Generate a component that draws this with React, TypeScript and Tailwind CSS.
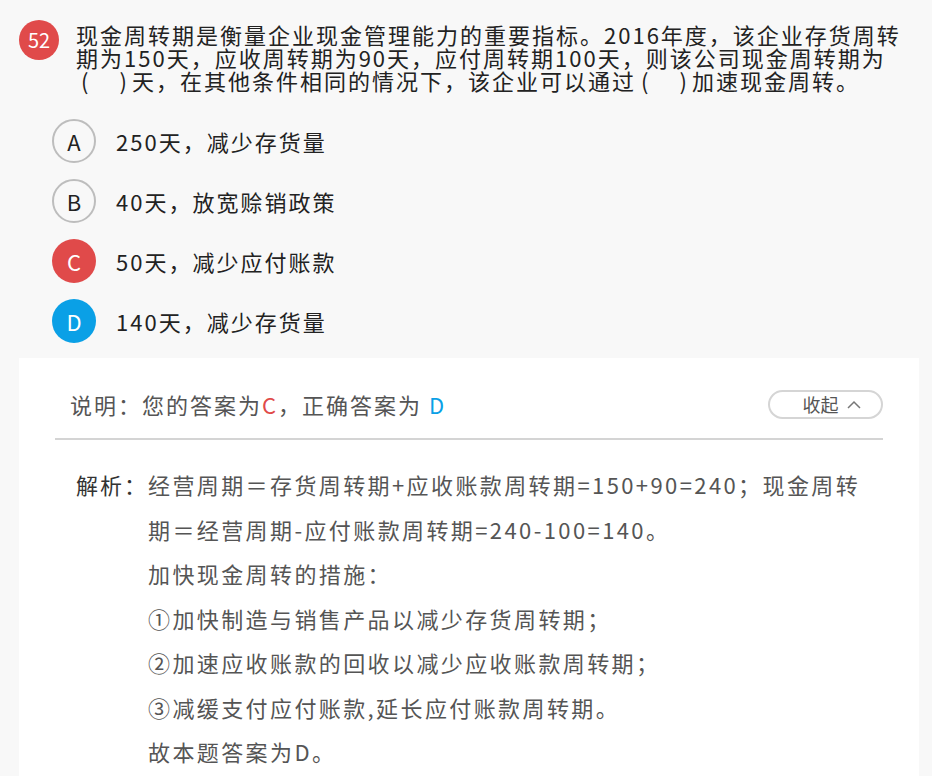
import React from 'react'

const options = [
  { key: 'A', text: '250天，减少存货量', state: 'none' },
  { key: 'B', text: '40天，放宽赊销政策', state: 'none' },
  { key: 'C', text: '50天，减少应付账款', state: 'wrong' },
  { key: 'D', text: '140天，减少存货量', state: 'right' },
]

const analysis = [
  '经营周期＝存货周转期+应收账款周转期=150+90=240；现金周转',
  '期＝经营周期-应付账款周转期=240-100=140。',
  '加快现金周转的措施：',
  '①加快制造与销售产品以减少存货周转期；',
  '②加速应收账款的回收以减少应收账款周转期；',
  '③减缓支付应付账款,延长应付账款周转期。',
  '故本题答案为D。',
]

function Blank() {
  return (
    <span className="inline-flex w-[56px] justify-between px-[5px] tracking-normal">
      <span>(</span>
      <span>)</span>
    </span>
  )
}

export default function App() {
  return (
    <div className="min-h-[776px] bg-[#f8f8f8] font-['Noto_Sans_CJK_SC',sans-serif] overflow-hidden">
      {/* Question */}
      <div className="flex items-start pt-[20px] pl-[19px]">
        <div className="w-10 h-10 shrink-0 rounded-full bg-[#e04a4a] text-white text-[20px] flex items-center justify-center">
          52
        </div>
        <div className="ml-[17px] mt-[3px] text-[22px] leading-[23px] text-[#222] tracking-[2px]">
          <div>现金周转期是衡量企业现金管理能力的重要指标。2016年度，该企业存货周转</div>
          <div>期为150天，应收周转期为90天，应付周转期100天，则该公司现金周转期为</div>
          <div>
            <Blank />天，在其他条件相同的情况下，该企业可以通过<Blank />加速现金周转。
          </div>
        </div>
      </div>

      {/* Options */}
      <div className="mt-[27px] pl-[52px] flex flex-col gap-4">
        {options.map((o) => (
          <div key={o.key} className="flex items-center h-[44px]">
            <div
              className={
                o.state === 'wrong'
                  ? 'w-[44px] h-[44px] rounded-full bg-[#e04a4a] text-white text-[22px] flex items-center justify-center'
                  : o.state === 'right'
                    ? 'w-[44px] h-[44px] rounded-full bg-[#0aa0e6] text-white text-[22px] flex items-center justify-center'
                    : 'w-[44px] h-[44px] rounded-full border-2 border-[#bdbdbd] text-[#222] text-[22px] flex items-center justify-center'
              }
            >
              {o.key}
            </div>
            <div className="ml-[20px] text-[22px] text-[#222] tracking-[2px]">{o.text}</div>
          </div>
        ))}
      </div>

      {/* Explanation panel */}
      <div className="mt-[15px] ml-[19px] w-[900px] bg-white pb-10">
        <div className="mx-[36px] pt-[30px] pb-[17px] flex items-center justify-between border-b-2 border-[#d4d4d4]">
          <div className="pl-[15px] text-[22px] text-[#555] tracking-[2px]">
            说明：您的答案为<span className="text-[#e04a4a]">C</span>，正确答案为 <span className="text-[#0aa0e6]">D</span>
          </div>
          <button className="w-[115px] h-[29px] rounded-full border-2 border-[#d5d5d5] flex items-center justify-center gap-2 pl-3 text-[18px] text-[#555]">
            收起
            <svg width="14" height="9" viewBox="0 0 14 9" fill="none">
              <path d="M1 8 L7 2 L13 8" stroke="#777" strokeWidth="1.5" />
            </svg>
          </button>
        </div>

        <div className="flex pl-[57px] pt-[22px] text-[22px] leading-[44.5px] tracking-[2.4px]">
          <div className="w-[72px] shrink-0 text-[#333] tracking-[2px]">解析：</div>
          <div className="text-[#555]">
            {analysis.map((line, i) => (
              <div key={i}>{line}</div>
            ))}
          </div>
        </div>
      </div>
    </div>
  )
}
